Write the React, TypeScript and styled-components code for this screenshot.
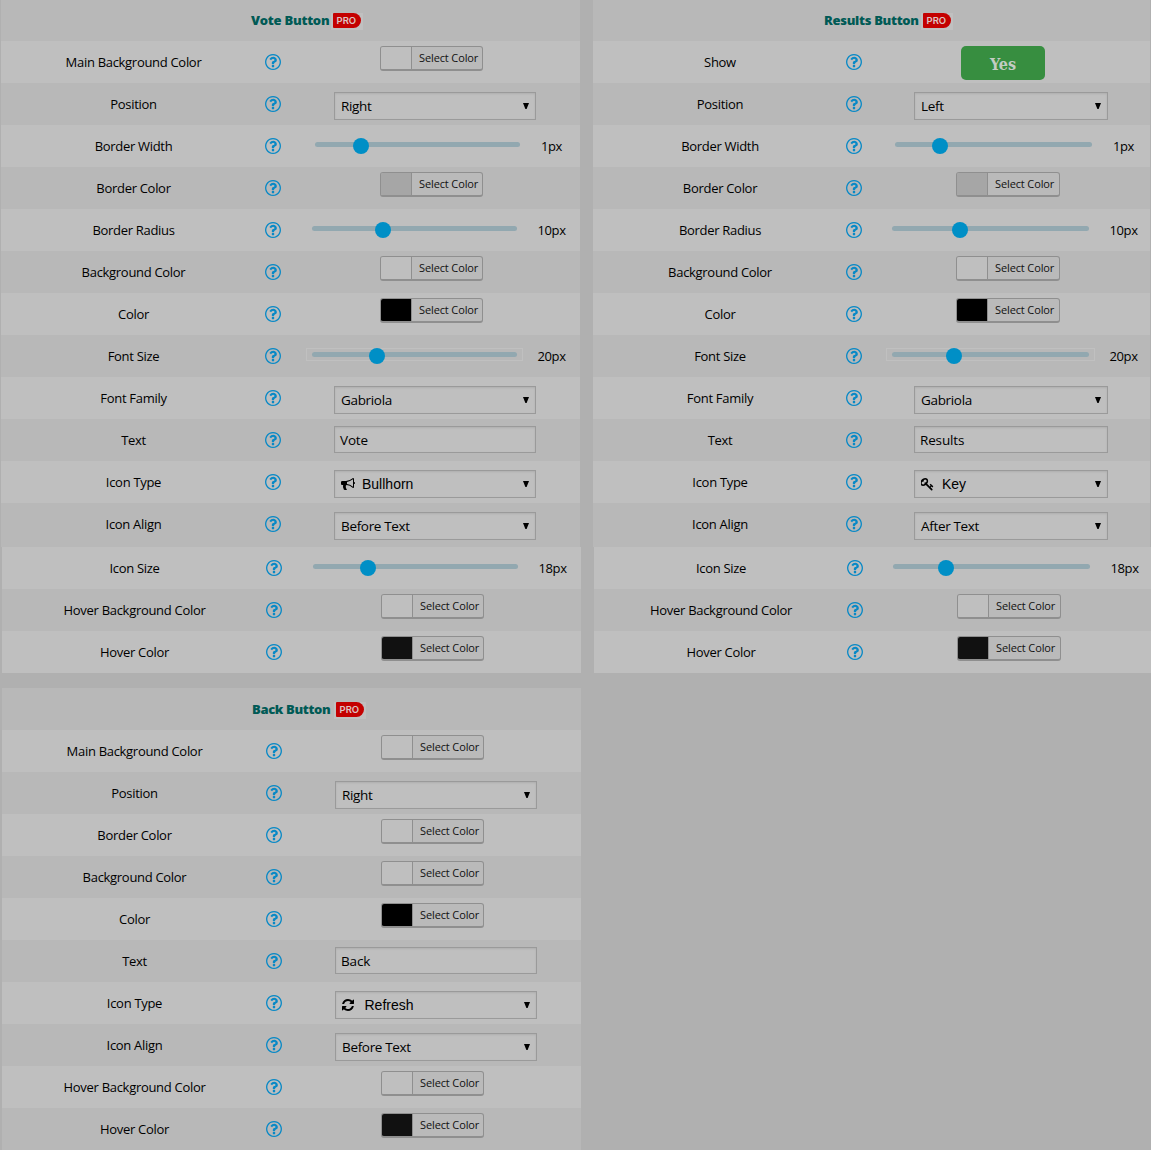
import React from "react";
import styled, { createGlobalStyle } from "styled-components";

const Global = createGlobalStyle`
  *, *::before, *::after { box-sizing: border-box; }
  body { margin: 0; background: #b0b0b0; overflow: hidden; }
`;

const Page = styled.main`
  width: 1151px;
  height: 1150px;
  overflow: hidden;
  background: #b0b0b0;
  color: #000;
  font-family: "Open Sans", "Noto Sans", sans-serif;
  font-size: 13px;
`;

const Columns = styled.div`
  display: grid;
  grid-template-columns: 593px 558px;
  margin-bottom: 15px;
`;

const Group = styled.section<{ $shift: number; $w: number }>`
  width: ${(p) => p.$w}px;
  margin-left: ${(p) => p.$shift}px;
`;

const Header = styled.header<{ $top?: boolean; $left: number }>`
  display: flex;
  align-items: flex-start;
  height: ${(p) => (p.$top ? 41 : 42)}px;
  padding-top: ${(p) => (p.$top ? 13 : 14)}px;
  padding-left: ${(p) => p.$left}px;
  background: #b8b8b8;
`;

const Title = styled.h2<{ $w: number; $ls: number }>`
  width: ${(p) => p.$w}px;
  margin: 0;
  color: #005a55;
  font-size: 13px;
  font-weight: 800;
  line-height: 15px;
  letter-spacing: ${(p) => p.$ls}px;
  white-space: nowrap;
`;

const BadgeFrame = styled.span`
  width: 32px;
  height: 17px;
  padding: 0 2px 2px;
  background: #c0c0c0;
`;

const Badge = styled.span`
  display: block;
  height: 15px;
  border-radius: 1px 8px 8px 1px;
  background: #c40000;
  color: #dcc4c4;
  font: 600 9.5px/15px Inter, "Open Sans", sans-serif;
  letter-spacing: 0;
  padding-left: 3.5px;
`;

const Line = styled.div<{ $dark: boolean; $h: number; $label: number }>`
  display: grid;
  grid-template-columns: ${(p) => p.$label}px 16px 1fr;
  height: ${(p) => p.$h}px;
  background: ${(p) => (p.$dark ? "#b8b8b8" : "#bfbfbf")};
`;

const Label = styled.span`
  padding-left: 1px;
  letter-spacing: -0.3px;
  text-align: center;
  line-height: 42px;
  white-space: nowrap;
`;

const Help = styled.svg`
  width: 16px;
  height: 16px;
  margin-top: 12.6px;
  fill: #0889c6;
`;

const Cell = styled.div<{ $x: number; $y: number }>`
  display: flex;
  align-items: flex-start;
  padding-left: ${(p) => p.$x}px;
  padding-top: ${(p) => p.$y}px;
`;

const Picker = styled.button<{ $w: number }>`
  display: flex;
  width: ${(p) => p.$w}px;
  height: 25px;
  padding: 0;
  overflow: hidden;
  border: 1px solid #8f8f8f;
  border-bottom-width: 2px;
  border-radius: 3px;
  background: #bababa;
  color: #111;
`;

const Swatch = styled.span<{ $c: string }>`
  flex: 0 0 31px;
  width: 31px;
  height: 22px;
  border-right: 1px solid #8f8f8f;
  background: ${(p) => p.$c};
`;

const PickerText = styled.span`
  flex: 1;
  padding-left: 7px;
  font: 11px/22px "Open Sans", "Noto Sans", sans-serif;
  letter-spacing: -0.12px;
  text-align: left;
  white-space: nowrap;
`;

const Select = styled.div<{ $w: number }>`
  display: flex;
  align-items: center;
  justify-content: space-between;
  width: ${(p) => p.$w}px;
  height: 28px;
  padding: 0 6px;
  border: 1px solid #9a9a9a;
  background: #bfbfbf;
  box-shadow: inset 0 1px 2px rgba(0, 0, 0, 0.09);
  font-size: 14px;
`;

const Choice = styled.span<{ $icon?: boolean }>`
  display: flex;
  align-items: center;
  line-height: 26px;
  font-family: ${(p) => (p.$icon ? '"Liberation Sans", Arial, sans-serif' : "inherit")};
  font-size: ${(p) => (p.$icon ? "14px" : "13.5px")};
  letter-spacing: ${(p) => (p.$icon ? "0" : "-0.33px")};
  white-space: nowrap;
`;

const Glyph = styled.svg<{ $w: number; $gap: number }>`
  width: ${(p) => p.$w}px;
  height: 14px;
  margin-right: ${(p) => p.$gap}px;
`;

const Arrow = styled.svg`
  width: 6px;
  height: 6px;
  margin-bottom: 1px;
`;

const Input = styled.div<{ $w: number }>`
  width: ${(p) => p.$w}px;
  height: 27px;
  padding-left: 5px;
  border: 1px solid #9a9a9a;
  background: #bfbfbf;
  box-shadow: inset 0 1px 2px rgba(0, 0, 0, 0.09);
  font-size: 13.5px;
  letter-spacing: -0.15px;
  line-height: 26px;
`;

const SliderBox = styled.div<{ $w: number; $outlined?: boolean }>`
  position: relative;
  width: ${(p) => p.$w}px;
  height: 13px;
  padding: 3px 5px;
  border: 1px solid ${(p) => (p.$outlined ? "#c0c0c0" : "transparent")};
`;

const Track = styled.div`
  height: 5px;
  border-radius: 2.5px;
  background: #92a8b0;
`;

const Thumb = styled.span<{ $x: number }>`
  position: absolute;
  top: -1px;
  left: ${(p) => p.$x}px;
  width: 16px;
  height: 16px;
  border-radius: 50%;
  background: #008fc6;
`;

const Value = styled.span<{ $dx: number }>`
  width: 40px;
  margin-left: ${(p) => p.$dx}px;
  letter-spacing: -0.35px;
  line-height: 16px;
  text-align: center;
`;

const Toggle = styled.button`
  width: 84px;
  height: 34px;
  padding: 3px 0 0;
  border: 0;
  border-radius: 5px;
  background: #378e40;
  color: #c3ccc3;
  font: bold 16px/31px "DejaVu Serif Condensed", "DejaVu Serif", serif;
`;

const PATHS: Record<string, string> = {
  help: "M1008 1200v160q0 14-9 23t-23 9h-160q-14 0-23-9t-9-23v-160q0-14 9-23t23-9h160q14 0 23 9t9 23zm256-496q0 50-15 90t-45.5 69-52 44-59.5 36q-32 18-46.5 28t-26 24-11.5 29v32q0 14-9 23t-23 9h-160q-14 0-23-9t-9-23v-68q0-35 10.5-64.5t24-47.5 39-41 41-25.5 44.5-21q53-25 75-43t22-49q0-42-43.5-71.5t-95.5-29.5q-56 0-95 27-29 20-80 83-9 12-25 12-11 0-19-6l-108-82q-10-7-12-20t5-23q122-192 349-192 129 0 238.5 89.5t109.5 214.5zm-368-448q-130 0-248.5 51t-204 136.5-136.5 204-51 248.5 51 248.5 136.5 204 204 136.5 248.5 51 248.5-51 204-136.5 136.5-204 51-248.5-51-248.5-136.5-204-204-136.5-248.5-51zm768 640q0 209-103 385.5t-279.5 279.5-385.5 103-385.5-103-279.5-279.5-103-385.5 103-385.5 279.5-279.5 385.5-103 385.5 103 279.5 279.5 103 385.5z",
  Bullhorn: "M1664 640q53 0 90.5 37.5t37.5 90.5-37.5 90.5-90.5 37.5v384q0 52-38 90t-90 38q-417-347-812-380-58 19-91 66t-31 100.5 40 92.5q-20 33-23 65.5t6 58 33.5 55 48 50 61.5 50.5q-29 58-111.5 83t-168.5 11.5-132-55.5q-7-23-29.5-87.5t-32-94.5-23-89-15-101 3.5-98.5 22-110.5h-122q-66 0-113-47t-47-113v-192q0-66 47-113t113-47h480q435 0 896-384 52 0 90 38t38 90v384zm-128 604v-954q-394 302-768 343v270q377 42 768 341z",
  Key: "M832 512q0-80-56-136t-136-56-136 56-56 136q0 42 19 83-41-19-83-19-80 0-136 56t-56 136 56 136 136 56 136-56 56-136q0-42-19-83 41 19 83 19 80 0 136-56t56-136zm851 704q0 17-49 66t-66 49q-9 0-28.5-16t-36.5-33-38.5-40-24.5-26l-96 96 220 220q28 28 28 68 0 42-39 81t-81 39q-40 0-68-28l-671-671q-176 131-365 131-163 0-265.5-102.5t-102.5-265.5q0-160 95-313t248-248 313-95q163 0 265.5 102.5t102.5 265.5q0 189-131 365l355 355 96-96q-3-3-26-24.5t-40-38.5-33-36.5-16-28.5q0-17 49-66t66-49q13 0 23 10 6 6 46 44.5t82 79.5 86.5 86 73 78 28.5 41z",
  Refresh: "M1639 1056q0 5-1 7-64 268-268 434.5t-478 166.5q-146 0-282.5-55t-243.5-157l-129 129q-19 19-45 19t-45-19-19-45v-448q0-26 19-45t45-19h448q26 0 45 19t19 45-19 45l-137 137q71 66 161 102t187 36q134 0 250-65t186-179q11-17 53-117 8-23 30-23h192q13 0 22.5 9.5t9.5 22.5zm25-800v448q0 26-19 45t-45 19h-448q-26 0-45-19t-19-45 19-45l138-138q-148-137-349-137-134 0-250 65t-186 179q-11 17-53 117-8 23-30 23h-199q-13 0-22.5-9.5t-9.5-22.5v-7q65-268 270-434.5t480-166.5q146 0 284 55.5t245 156.5l130-129q19-19 45-19t45 19 19 45z",
};

const GLYPHS: Record<string, { box: string; w: number; gap: number }> = {
  Bullhorn: { box: "0 0 1792 1792", w: 14, gap: 7 },
  Key: { box: "109 0 1664 1792", w: 13, gap: 8 },
  Refresh: { box: "128 0 1536 1792", w: 12, gap: 10.5 },
};

type Spec =
  | { kind: "color"; label: string; color: string }
  | { kind: "select"; label: string; value: string; icon?: boolean }
  | { kind: "text"; label: string; value: string }
  | { kind: "toggle"; label: string; value: string }
  | { kind: "slider"; label: string; value: string; thumb: number; outlined?: boolean };

// Column metrics measured from the left edge of a panel.
interface Metrics {
  label: number;
  field: number;
  fieldW: number;
  picker: number;
  pickerW: number;
  slider: number;
  sliderW: number;
  value: number;
}

const LEFT: Metrics = { label: 264, field: 333, fieldW: 202, picker: 379, pickerW: 103, slider: 305, sliderW: 217, value: 530.5 };
const RIGHT: Metrics = { label: 253, field: 321, fieldW: 194, picker: 363, pickerW: 104, slider: 293, sliderW: 209, value: 510.5 };

function Control({ spec, m }: { spec: Spec; m: Metrics }) {
  const base = m.label + 16;
  switch (spec.kind) {
    case "color":
      return (
        <Cell $x={m.picker - base} $y={5}>
          <Picker $w={m.pickerW}>
            <Swatch $c={spec.color} />
            <PickerText>Select Color</PickerText>
          </Picker>
        </Cell>
      );
    case "select": {
      const g = spec.icon ? GLYPHS[spec.value] : undefined;
      return (
        <Cell $x={m.field - base} $y={9}>
          <Select $w={m.fieldW}>
            <Choice $icon={spec.icon}>
              {g && (
                <Glyph $w={g.w} $gap={g.gap} viewBox={g.box}>
                  <path d={PATHS[spec.value]} />
                </Glyph>
              )}
              {spec.value}
            </Choice>
            <Arrow viewBox="0 0 6 6">
              <path d="M0 0h6L3.6 6H2.4z" />
            </Arrow>
          </Select>
        </Cell>
      );
    }
    case "text":
      return (
        <Cell $x={m.field - base} $y={7}>
          <Input $w={m.fieldW}>{spec.value}</Input>
        </Cell>
      );
    case "toggle":
      return (
        <Cell $x={368 - base} $y={5}>
          <Toggle>{spec.value}</Toggle>
        </Cell>
      );
    case "slider": {
      const nudge = spec.value === "1px" ? 3 : 0;
      const start = m.slider + nudge;
      return (
        <Cell $x={start - base} $y={13}>
          <SliderBox $w={m.sliderW} $outlined={spec.outlined}>
            <Track />
            <Thumb $x={spec.thumb - start - 9} />
          </SliderBox>
          <Value $dx={m.value - start - m.sliderW}>{spec.value}</Value>
        </Cell>
      );
    }
  }
}

function Rows({ specs, m, tall }: { specs: Spec[]; m: Metrics; tall?: boolean }) {
  return (
    <>
      {specs.map((s, i) => (
        <Line
          key={s.label}
          $dark={i % 2 === 1}
          $h={tall && i === specs.length - 1 ? 44 : 42}
          $label={m.label}
        >
          <Label>{s.label}</Label>
          <Help viewBox="128 128 1536 1536">
            <path d={PATHS.help} />
          </Help>
          <Control spec={s} m={m} />
        </Line>
      ))}
    </>
  );
}

const color = (label: string, c = "#bfbfbf"): Spec => ({ kind: "color", label, color: c });
const select = (label: string, value: string, icon = false): Spec => ({ kind: "select", label, value, icon });
const slider = (label: string, value: string, thumb: number, outlined = false): Spec => ({ kind: "slider", label, value, thumb, outlined });
const text = (value: string): Spec => ({ kind: "text", label: "Text", value });

const vote: Spec[] = [
  color("Main Background Color"),
  select("Position", "Right"),
  slider("Border Width", "1px", 360),
  color("Border Color", "#a6a6a6"),
  slider("Border Radius", "10px", 382),
  color("Background Color"),
  color("Color", "#000"),
  slider("Font Size", "20px", 376, true),
  select("Font Family", "Gabriola"),
  text("Vote"),
  select("Icon Type", "Bullhorn", true),
  select("Icon Align", "Before Text"),
];

const results: Spec[] = [
  { kind: "toggle", label: "Show", value: "Yes" },
  select("Position", "Left"),
  slider("Border Width", "1px", 347),
  color("Border Color", "#a6a6a6"),
  slider("Border Radius", "10px", 367),
  color("Background Color"),
  color("Color", "#000"),
  slider("Font Size", "20px", 361, true),
  select("Font Family", "Gabriola"),
  text("Results"),
  select("Icon Type", "Key", true),
  select("Icon Align", "After Text"),
];

const tail = (thumb: number): Spec[] => [
  slider("Icon Size", "18px", thumb),
  color("Hover Background Color"),
  color("Hover Color", "#111"),
];

const back: Spec[] = [
  color("Main Background Color"),
  select("Position", "Right"),
  color("Border Color"),
  color("Background Color"),
  color("Color", "#000"),
  text("Back"),
  select("Icon Type", "Refresh", true),
  select("Icon Align", "Before Text"),
  color("Hover Background Color"),
  color("Hover Color", "#111"),
];

function Heading({ title, left, width, top, spacing }: { title: string; left: number; width: number; top?: boolean; spacing: number }) {
  return (
    <Header $top={top} $left={left}>
      <Title $w={width} $ls={spacing}>{title}</Title>
      <BadgeFrame>
        <Badge>PRO</Badge>
      </BadgeFrame>
    </Header>
  );
}

export default function App() {
  return (
    <Page>
      <Global />
      <Columns>
        <div>
          <Group $shift={1} $w={579}>
            <Heading top title="Vote Button" left={250} width={80} spacing={-0.25} />
            <Rows specs={vote} m={LEFT} tall />
          </Group>
          <Group $shift={2} $w={579}>
            <Rows specs={tail(366)} m={LEFT} />
          </Group>
        </div>
        <div>
          <Group $shift={0} $w={557}>
            <Heading top title="Results Button" left={231} width={97} spacing={-0.3} />
            <Rows specs={results} m={RIGHT} tall />
          </Group>
          <Group $shift={1} $w={557}>
            <Rows specs={tail(352)} m={RIGHT} />
          </Group>
        </div>
      </Columns>
      <Group $shift={2} $w={579}>
        <Heading title="Back Button" left={250} width={82} spacing={-0.35} />
        <Rows specs={back} m={LEFT} />
      </Group>
    </Page>
  );
}
